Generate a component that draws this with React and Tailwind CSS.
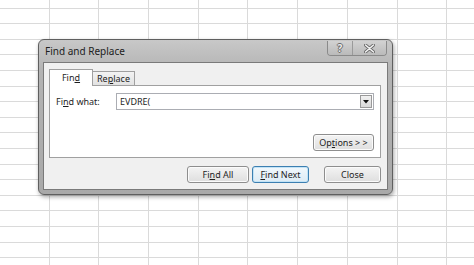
import React from "react";

const F = { fontFamily: '"Noto Sans", "Open Sans", sans-serif' };

function Grid() {
  const rows = [];
  rows.push(
    <div key="top" className="flex h-[8.6px] border-b border-[#dadada]">
      {Array.from({ length: 10 }).map((_, c) => (
        <div key={c} className="w-[49.7px] shrink-0 border-r border-[#dadada]" />
      ))}
    </div>
  );
  for (let r = 0; r < 17; r++) {
    rows.push(
      <div key={r} className="flex h-[15.6px] border-b border-[#dadada]">
        {Array.from({ length: 10 }).map((_, c) => (
          <div key={c} className="w-[49.7px] shrink-0 border-r border-[#dadada]" />
        ))}
      </div>
    );
  }
  return <div className="flex flex-col">{rows}</div>;
}

function Btn({ children, className = "", focused = false }) {
  return (
    <div
      className={
        "flex items-center justify-center rounded-[3px] border text-[9px] text-[#1e1e1e] " +
        (focused
          ? "border-[#3c7fb1] bg-[linear-gradient(#f2f8fc,#dcebf5)] shadow-[inset_0_0_0_1px_#c2e3f6] "
          : "border-[#8e8e8e] bg-[linear-gradient(#f4f4f4,#dedede)] shadow-[inset_0_0_0_1px_#fbfbfb] ") +
        className
      }
    >
      {children}
    </div>
  );
}

export default function App() {
  return (
    <div className="relative h-[265px] w-[474px] overflow-hidden bg-white" style={F}>
      <Grid />
      {/* dialog window */}
      <div className="absolute left-[38px] top-[39px] flex h-[156px] w-[355px] flex-col rounded-[6px] border border-[#5f5f5f] bg-[linear-gradient(#c8c8c8,#b3b3b3_20%,#a9a9a9)] shadow-[1px_2px_4px_rgba(0,0,0,0.35)]">
        {/* title bar */}
        <div className="relative flex h-[22px] shrink-0 items-center pl-[6px]">
          <span className="text-[10px] text-[#202020]">Find and Replace</span>
          <div className="absolute right-[5px] top-[1px] flex h-[15px] overflow-hidden rounded-b-[4px] border border-t-0 border-[#8a8a8a]">
            <div className="flex w-[25px] items-center justify-center border-r border-[#9a9a9a] bg-[linear-gradient(#d2d2d2,#bababa)] text-[10px] font-bold text-[#ececec] [text-shadow:-1px_0_#6a6a6a,1px_0_#6a6a6a,0_-1px_#6a6a6a,0_1px_#6a6a6a]">
              ?
            </div>
            <div className="flex w-[33px] items-center justify-center bg-[linear-gradient(#d2d2d2,#bababa)]">
              <svg width="11" height="9" viewBox="0 0 11 9">
                <path d="M1.5 1 L9.5 8 M9.5 1 L1.5 8" stroke="#666" strokeWidth="3.2" strokeLinecap="round" />
                <path d="M1.5 1 L9.5 8 M9.5 1 L1.5 8" stroke="#f2f2f2" strokeWidth="1.6" strokeLinecap="round" />
              </svg>
            </div>
          </div>
        </div>
        {/* client area */}
        <div className="mx-[4px] mb-[4px] flex flex-1 flex-col border border-[#7a7a7a] bg-[#f0f0f0] px-[5px] pt-[5px]">
          {/* tabs */}
          <div className="flex h-[17px] items-end">
            <div className="relative z-10 -mb-px flex h-[17px] w-[44px] items-center justify-center border border-b-0 border-[#a0a0a0] bg-white text-[9px] text-[#1e1e1e]">
              <span>
                Fin<u>d</u>
              </span>
            </div>
            <div className="flex h-[14px] w-[42px] items-center justify-center border border-b-0 border-l-0 border-[#a0a0a0] bg-[linear-gradient(#f3f3f3,#e2e2e2)] text-[9px] text-[#1e1e1e]">
              <span>
                Re<u>p</u>lace
              </span>
            </div>
          </div>
          {/* panel */}
          <div className="flex h-[73px] w-[332px] flex-col border border-[#a0a0a0] bg-white px-[6px] pt-[7px]">
            <div className="flex h-[17px] items-center">
              <span className="w-[60px] text-[9px] text-[#1e1e1e]">
                Fi<u>n</u>d what:
              </span>
              <div className="flex h-[17px] flex-1 items-center border border-[#abadb3] pl-[3px] text-[9px] text-[#1e1e1e]">
                <span className="flex-1">EVDRE(</span>
                <div className="mr-[1px] flex h-[13px] w-[12px] items-center justify-center border border-[#9a9a9a] bg-[linear-gradient(#f2f2f2,#d8d8d8)]">
                  <svg width="6" height="4" viewBox="0 0 6 4">
                    <path d="M0 0 L6 0 L3 3.5 Z" fill="#111" />
                  </svg>
                </div>
              </div>
            </div>
            <div className="mt-[24px] flex justify-end">
              <Btn className="h-[17px] w-[61px]">
                <span>
                  Op<u>t</u>ions &gt; &gt;
                </span>
              </Btn>
            </div>
          </div>
          {/* bottom buttons */}
          <div className="mt-[8px] flex w-[332px] justify-end">
            <Btn className="h-[17px] w-[62px]">
              <span>
                Fi<u>n</u>d All
              </span>
            </Btn>
            <Btn focused className="ml-[3px] h-[17px] w-[57px]">
              <span>
                <u>F</u>ind Next
              </span>
            </Btn>
            <Btn className="ml-[15px] h-[17px] w-[57px]">
              <span>Close</span>
            </Btn>
          </div>
        </div>
      </div>
    </div>
  );
}
